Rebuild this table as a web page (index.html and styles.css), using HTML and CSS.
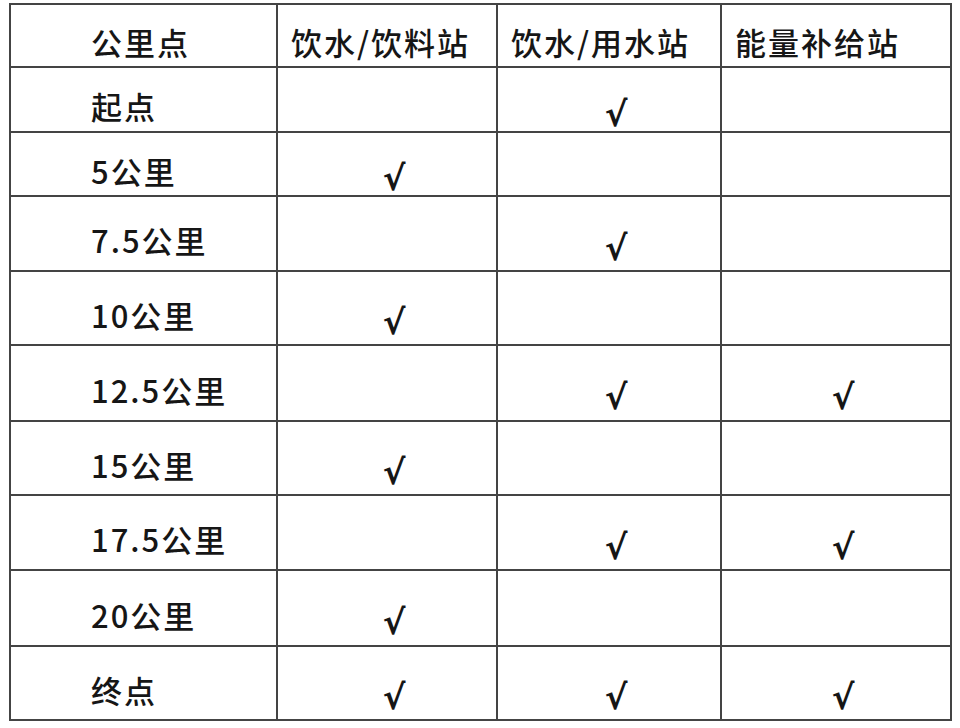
FILE: index.html
```html
<!DOCTYPE html>
<html lang="zh-CN">
<head>
<meta charset="utf-8">
<title>补给站</title>
<link rel="stylesheet" href="styles.css">
</head>
<body>
<table class="supply">
  <colgroup>
    <col class="c1"><col class="c2"><col class="c3"><col class="c4">
  </colgroup>
  <thead>
    <tr class="r0">
      <th class="km">公里点</th>
      <th>饮水/饮料站</th>
      <th>饮水/用水站</th>
      <th>能量补给站</th>
    </tr>
  </thead>
  <tbody>
    <tr class="r1"><td class="km">起点</td><td></td><td class="ck">√</td><td></td></tr>
    <tr class="r2"><td class="km">5公里</td><td class="ck">√</td><td></td><td></td></tr>
    <tr class="r3"><td class="km">7.5公里</td><td></td><td class="ck">√</td><td></td></tr>
    <tr class="r4"><td class="km">10公里</td><td class="ck">√</td><td></td><td></td></tr>
    <tr class="r5"><td class="km">12.5公里</td><td></td><td class="ck">√</td><td class="ck">√</td></tr>
    <tr class="r6"><td class="km">15公里</td><td class="ck">√</td><td></td><td></td></tr>
    <tr class="r7"><td class="km">17.5公里</td><td></td><td class="ck">√</td><td class="ck">√</td></tr>
    <tr class="r8"><td class="km">20公里</td><td class="ck">√</td><td></td><td></td></tr>
    <tr class="r9"><td class="km">终点</td><td class="ck">√</td><td class="ck">√</td><td class="ck">√</td></tr>
  </tbody>
</table>
</body>
</html>
```
FILE: styles.css
```css
html, body {
  margin: 0;
  padding: 0;
  background: #ffffff;
}

body {
  width: 960px;
  height: 728px;
  overflow: hidden;
}

.supply {
  margin: 3px 0 0 9px;
  border-collapse: collapse;
  table-layout: fixed;
  width: 943px;
  font-family: "Noto Sans CJK SC", "Noto Sans", sans-serif;
  font-size: 31px;
  font-weight: 500;
  letter-spacing: 2px;
  color: #161616;
}

.c1 { width: 267px; }
.c2 { width: 220px; }
.c3 { width: 224px; }
.c4 { width: 230px; }

.supply th,
.supply td {
  border: 2px solid #444444;
  padding: 12px 0 0 13px;
  text-align: left;
  vertical-align: middle;
  font-weight: 500;
  line-height: 1;
  white-space: nowrap;
}

.supply .km {
  padding-left: 80px;
}

.supply td.ck {
  text-align: center;
  padding: 28px 0 0 14px;
  font-weight: 700;
  font-family: "DejaVu Sans", sans-serif;
  font-size: 34px;
  letter-spacing: 0;
}

.r0 { height: 63px; }
.r1 { height: 65px; }
.r2 { height: 64px; }
.r3 { height: 75px; }
.r4 { height: 74px; }
.r5 { height: 76px; }
.r6 { height: 74px; }
.r7 { height: 75px; }
.r8 { height: 76px; }
.r9 { height: 74px; }
```
